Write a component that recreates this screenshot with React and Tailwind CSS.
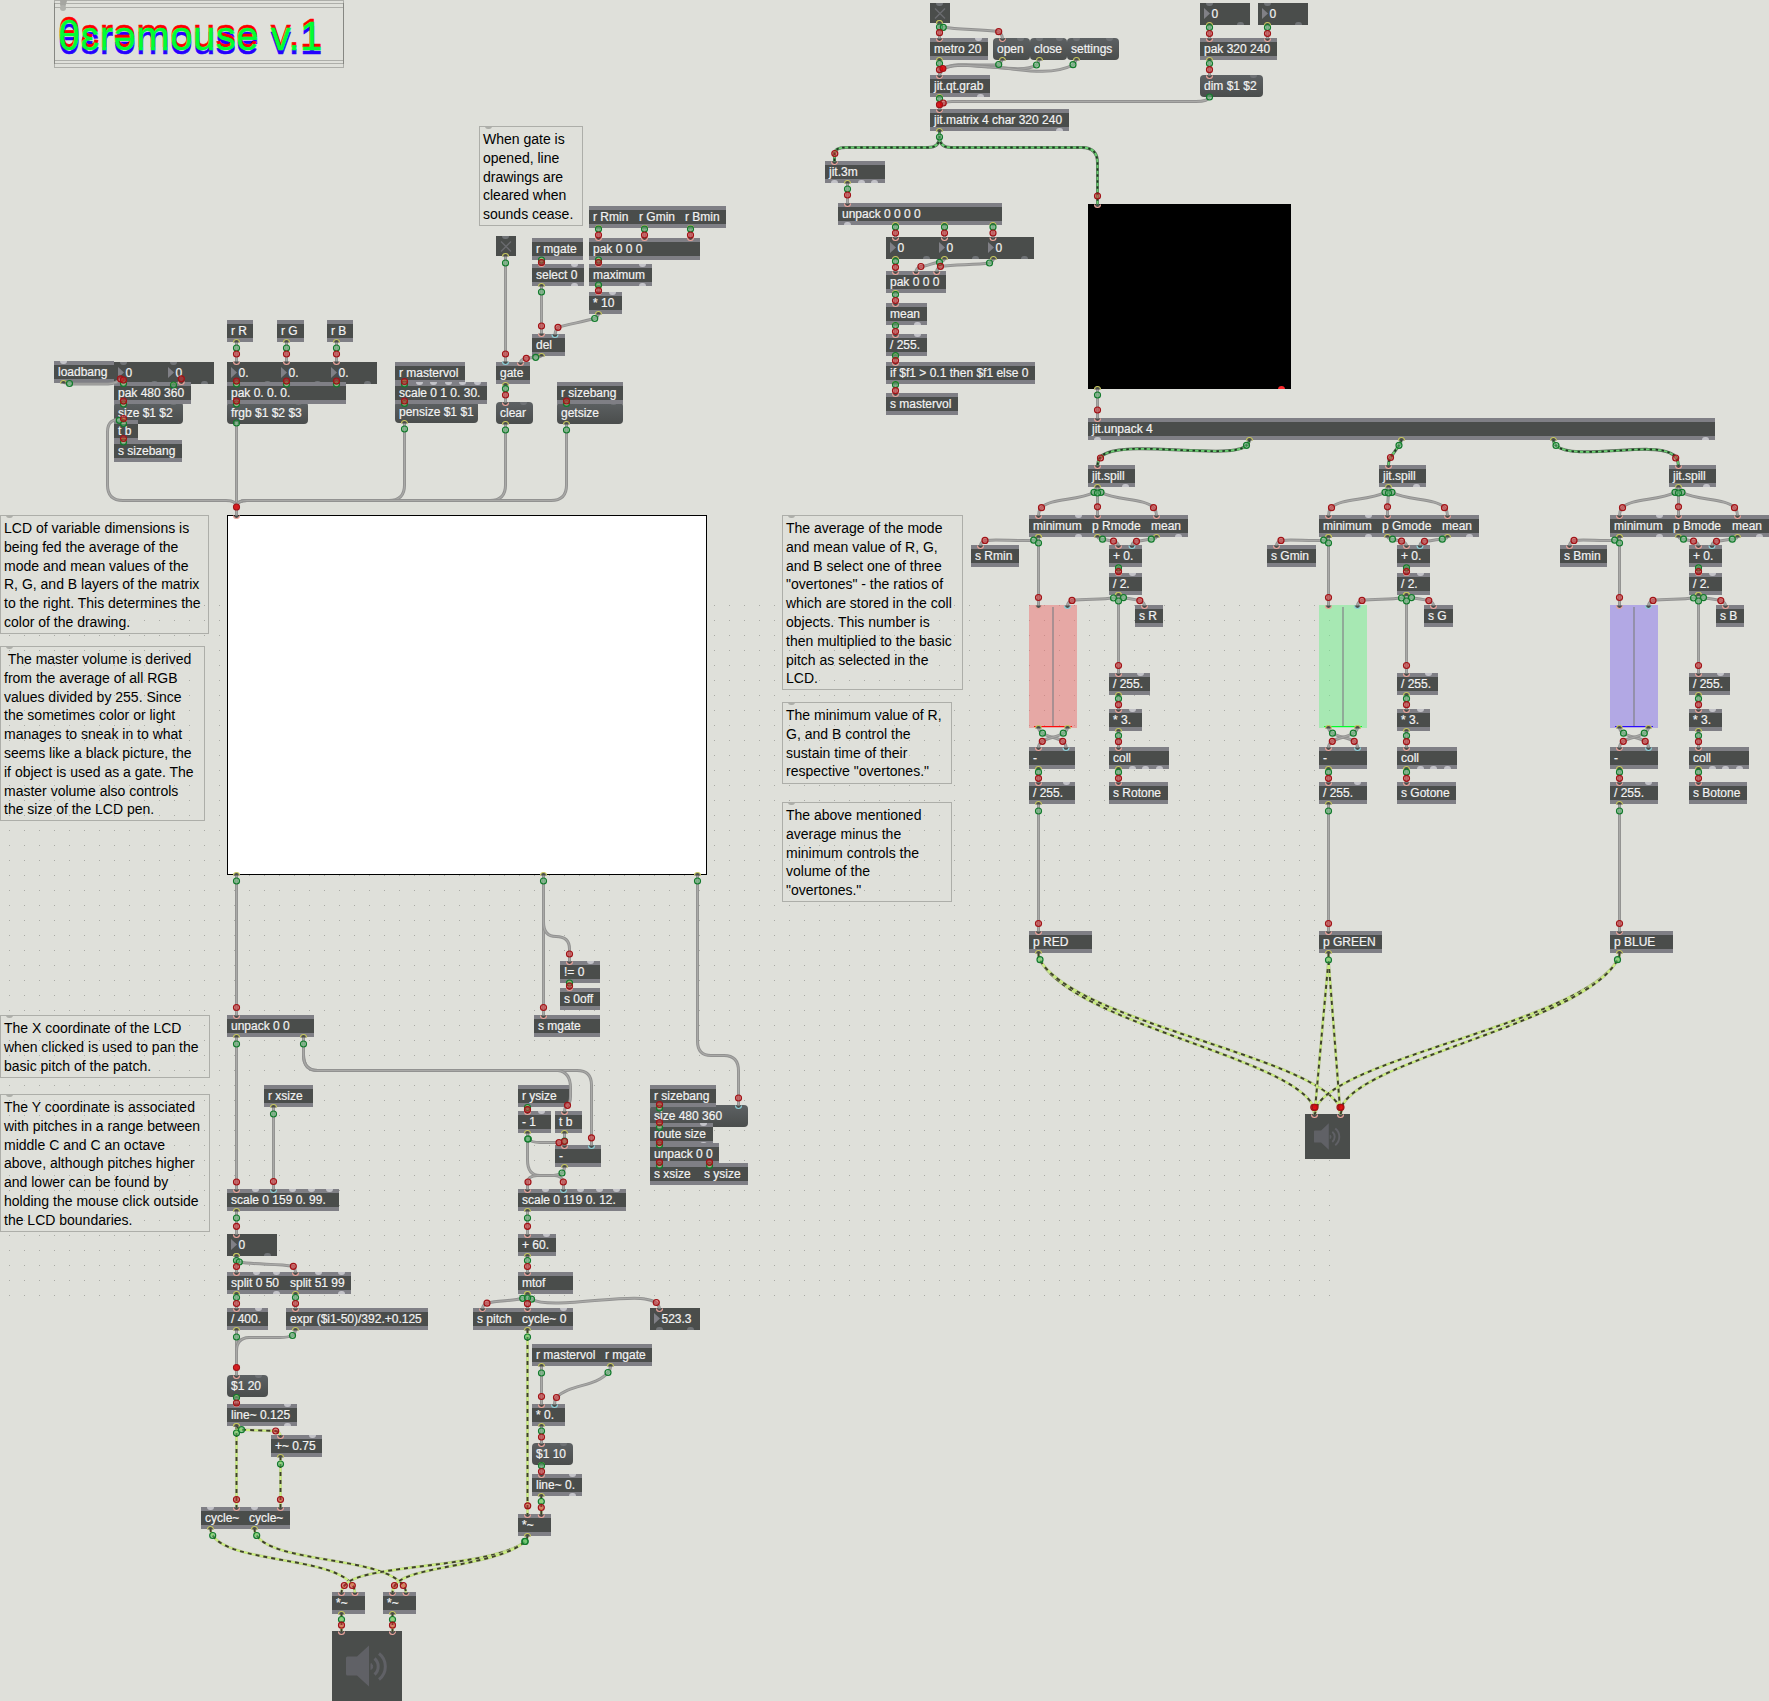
import React from "react";

/* ---------- objects: [kind, x, y, width, text, free inlets, free outlets] ---------- */
/* kinds: o = object, m = message, n = number */
const NODES = [
  ["n", 114, 362, 50, "0", [123.5], [154.5]],
  ["n", 164, 362, 50, "0", [173.5], [204.5]],
  ["o", 54, 361, 60, "loadbang", [63.5], []],
  ["m", 114, 402, 69, "size $1 $2", [173.5], []],
  ["o", 114, 382, 77, "pak 480 360", [], []],
  ["o", 114, 420, 24, "t b", [], []],
  ["o", 114, 440, 68, "s sizebang", [], []],
  ["o", 227, 320, 26, "r R", [], []],
  ["o", 277, 320, 27, "r G", [], []],
  ["o", 327, 320, 26, "r B", [], []],
  ["n", 227, 362, 50, "0.", [], [267.5]],
  ["n", 277, 362, 50, "0.", [], [317.5]],
  ["n", 327, 362, 50, "0.", [], [367.5]],
  ["m", 227, 402, 81, "frgb $1 $2 $3", [298.5], []],
  ["o", 227, 382, 119, "pak 0. 0. 0.", [], []],
  ["m", 395, 401, 83, "pensize $1 $1", [468.5], []],
  ["o", 395, 362, 70, "r mastervol", [], []],
  ["o", 395, 382, 92, "scale 0 1 0. 30.", [419, 433.5, 448, 462.5, 477.5], []],
  ["o", 532, 238, 51, "r mgate", [], []],
  ["o", 532, 264, 52, "select 0", [574.5], [574.5]],
  ["o", 589, 206, 46, "r Rmin", [], []],
  ["o", 635, 206, 46, "r Gmin", [], []],
  ["o", 681, 206, 45, "r Bmin", [], []],
  ["o", 589, 238, 111, "pak 0 0 0", [], []],
  ["o", 589, 264, 63, "maximum", [642.5], [642.5]],
  ["o", 589, 292, 33, "* 10", [612], []],
  ["o", 532, 334, 33, "del", [], []],
  ["o", 496, 362, 34, "gate", [], []],
  ["m", 496, 402, 37, "clear", [523.5], []],
  ["m", 557, 402, 66, "getsize", [613.5], []],
  ["o", 557, 382, 66, "r sizebang", [], []],

  ["o", 930, 38, 58, "metro 20", [978.5], []],
  ["m", 993, 38, 37, "open", [1020.5], []],
  ["m", 1030, 38, 37, "close", [1039.5, 1059.5], []],
  ["m", 1067, 38, 52, "settings", [1076.5, 1109.5], []],
  ["o", 930, 75, 60, "jit.qt.grab", [], [980.5]],
  ["o", 930, 109, 139, "jit.matrix 4 char 320 240", [], [1059.5]],
  ["n", 1200, 3, 50, "0", [1209.5], [1240.5]],
  ["n", 1258, 3, 50, "0", [1267.5], [1298.5]],
  ["o", 1200, 38, 77, "pak 320 240", [], []],
  ["m", 1200, 75, 63, "dim $1 $2", [1253.5], []],
  ["o", 825, 161, 60, "jit.3m", [], [834.5, 861.5, 874.5]],
  ["o", 838, 203, 164, "unpack 0 0 0 0", [], [847.5]],
  ["n", 886, 237, 50, "0", [], [926.5]],
  ["n", 935, 237, 50, "0", [], [975.5]],
  ["n", 984, 237, 50, "0", [], [1024.5]],
  ["o", 886, 271, 60, "pak 0 0 0", [], []],
  ["o", 886, 303, 41, "mean", [], [917.5]],
  ["o", 886, 334, 41, "/ 255.", [917.5], []],
  ["o", 886, 362, 149, "if $f1 > 0.1 then $f1 else 0", [], []],
  ["o", 886, 393, 72, "s mastervol", [], []],
  ["o", 1088, 418, 627, "jit.unpack 4", [], [1097.5, 1705.5]],

  ["o", 227, 1015, 87, "unpack 0 0", [], []],
  ["o", 534, 1015, 66, "s mgate", [], []],
  ["o", 560, 961, 40, "!= 0", [590.5], []],
  ["o", 560, 988, 40, "s 0off", [], []],
  ["o", 264, 1085, 49, "r xsize", [], []],
  ["o", 518, 1085, 51, "r ysize", [], []],
  ["o", 518, 1111, 33, "- 1", [541], []],
  ["o", 555, 1111, 27, "t b", [], []],
  ["o", 555, 1145, 46, "-", [], []],
  ["m", 650, 1105, 98, "size 480 360", [], []],
  ["o", 650, 1085, 66, "r sizebang", [], []],
  ["o", 650, 1123, 63, "route size", [703.5], [703.5]],
  ["o", 650, 1143, 69, "unpack 0 0", [], []],
  ["o", 650, 1163, 50, "s xsize", [], []],
  ["o", 700, 1163, 48, "s ysize", [], []],
  ["o", 227, 1189, 112, "scale 0 159 0. 99.", [255, 292.5, 311, 329.5], []],
  ["o", 518, 1189, 108, "scale 0 119 0. 12.", [545.5, 580.5, 599, 616.5], []],
  ["n", 227, 1234, 50, "0", [], [267.5]],
  ["o", 518, 1234, 38, "+ 60.", [546.5], []],
  ["o", 227, 1272, 59, "split 0 50", [256.5, 276.5], [276.5]],
  ["o", 286, 1272, 65, "split 51 99", [318.5, 341.5], [341.5]],
  ["o", 518, 1272, 55, "mtof", [], []],
  ["o", 227, 1308, 41, "/ 400.", [258.5], []],
  ["o", 286, 1308, 142, "expr ($i1-50)/392.+0.125", [], []],
  ["o", 473, 1308, 45, "s pitch", [], []],
  ["o", 518, 1308, 55, "cycle~ 0", [563.5], []],
  ["n", 650, 1308, 50, "523.3", [], [659.5, 690.5]],
  ["m", 227, 1375, 41, "$1 20", [258.5], []],
  ["o", 227, 1404, 70, "line~ 0.125", [287.5], [287.5]],
  ["o", 532, 1344, 69, "r mastervol", [], []],
  ["o", 601, 1344, 51, "r mgate", [], []],
  ["o", 532, 1404, 33, "* 0.", [], []],
  ["m", 532, 1443, 41, "$1 10", [563.5], []],
  ["o", 532, 1474, 50, "line~ 0.", [572.5], [572.5]],
  ["o", 518, 1514, 33, "*~", [], []],
  ["o", 271, 1435, 51, "+~ 0.75", [312.5], []],
  ["o", 201, 1507, 44, "cycle~", [210.5], []],
  ["o", 245, 1507, 45, "cycle~", [254.5], []],
  ["o", 332, 1592, 33, "*~", [], []],
  ["o", 383, 1592, 33, "*~", [], []],
];

/* ---------- one colour channel of the analysis section ---------- */
const CHANNELS = [
  { c: "R", name: "RED", spill: 1088, min: 1029, p: 1088, mean: 1147, s: 971, sw: 48, add: 1109, sx: 1135, sxw: 28, mw: 46, otw: 59, in2: 1066 },
  { c: "G", name: "GREEN", spill: 1379, min: 1319, p: 1378, mean: 1438, s: 1267, sw: 49, add: 1397, sx: 1424, sxw: 29, mw: 48, otw: 59, in2: 1357.5 },
  { c: "B", name: "BLUE", spill: 1669, min: 1610, p: 1669, mean: 1728, s: 1560, sw: 47, add: 1689, sx: 1716, sxw: 28, mw: 48, otw: 58, in2: 1648.5 },
];

CHANNELS.forEach((k) => {
  NODES.push(
    ["o", k.spill, 465, 47, "jit.spill", [], [k.spill + 37]],
    ["o", k.min, 515, k.p - k.min, "minimum", [k.min + 49], [k.min + 49]],
    ["o", k.p, 515, k.mean - k.p, `p ${k.c}mode`, [], []],
    ["o", k.mean, 515, 41, "mean", [], [k.mean + 31]],
    ["o", k.s, 545, k.sw, `s ${k.c}min`, [], []],
    ["o", k.add, 545, 33, "+ 0.", [], []],
    ["o", k.add, 573, 33, "/ 2.", [k.add + 23], []],
    ["o", k.sx, 605, k.sxw, `s ${k.c}`, [], []],
    ["o", k.add, 673, 41, "/ 255.", [k.add + 31.5], []],
    ["o", k.add, 709, 33, "* 3.", [k.add + 23], []],
    ["o", k.add, 747, 60, "coll", [], [k.add + 23, k.add + 36.5, k.add + 50]],
    ["o", k.add, 782, k.otw, `s ${k.c}otone`, [], []],
    ["o", k.min, 747, k.mw, "-", [], []],
    ["o", k.min, 782, k.mw, "/ 255.", [k.in2], []],
    ["o", k.min, 931, 63, `p ${k.name}`, [], []]
  );
});

/* ---------- patch cords: type, path, outlet, green handle, red handle, inlet ---------- */
const WIRES = [];
const cord = (t, d, out, g, r, inn, opt = {}) => WIRES.push({ t, d, out, g, r, inn, ...opt });
const vert = (x, y1, y2, gy, ry, t = "c", opt = {}) =>
  cord(t, `M${x} ${y1}V${y2}`, [x, y1], [x, gy], [x, ry], [x, y2], opt);
/* short S-shaped cord that runs through both handles */
const curve = (t, o, g, r, i, k = 0, opt = {}) => {
  const dx = r[0] - g[0];
  cord(
    t,
    `M${o[0]} ${o[1]}Q${o[0]} ${(o[1] + g[1]) / 2 + 1} ${g[0]} ${g[1]}C${g[0] + dx * 0.3} ${g[1] + k} ${r[0] - dx * 0.3} ${r[1] - k} ${r[0]} ${r[1]}Q${i[0]} ${(r[1] + i[1]) / 2 - 1} ${i[0]} ${i[1]}`,
    o, g, r, i, opt
  );
};

/* left top */
cord("c", "M63.5 382Q66 384 75 384H108Q117 383.5 120.5 379", [63.5, 382], [69.5, 383.5], [120.5, 378.8], null);
vert(123.5, 382, 382, 383.5, 380);
cord("c", "", [173.5, 384], [173.5, 385], [181.3, 378.8], [181.3, 382]);
vert(123.5, 403, 403, 404, 401);
vert(123.5, 420, 421, 423.5, 418.5);
vert(123.5, 440, 440, 442, 438.5);
cord("c", "M123.5 420Q107.5 417 107.5 432V485Q107.5 500.5 123 500.5H226Q236.5 500.5 236.5 507", null, [119.3, 420.3], null, null);
[236.5, 286.5, 336.5].forEach((x) => {
  vert(x, 341, 362, 348, 354);
  vert(x, 383, 383, 384, 381);
});
vert(236.5, 403, 403, 404, 401);
cord("c", "M236.5 422V516", null, [236.5, 423], [236.5, 507], [236.5, 516], { hot: true });
vert(404.5, 382, 382, 384, 381.5);
vert(404.5, 402, 402, 403.5, 401);
cord("c", "M404.5 422V485Q404.5 500.5 389 500.5H247Q236.5 500.5 236.5 507", [404.5, 422], [404.5, 429], null, null);
cord("c", "M505.5 423V485Q505.5 500.5 490 500.5H247Q236.5 500.5 236.5 507", [505.5, 423], [505.5, 430], null, null);
cord("c", "M566.5 423V485Q566.5 500.5 551 500.5H247Q236.5 500.5 236.5 507", [566.5, 423], [566.5, 430], null, null);
vert(566.5, 402, 402, 403.5, 401);
cord("c", "M505.5 255V363", [505.5, 255], [505.5, 263], [505.5, 354], [505.5, 362], { cold: true });
[598.5, 644.5, 690.5].forEach((x) => vert(x, 227, 238, 229, 235));
vert(541.5, 260, 264, 260, 262.5);
vert(598.5, 260, 264, 260, 262.5);
vert(598.5, 286, 292, 285, 290.7);
vert(541.5, 285, 334, 292, 326);
curve("c", [598.5, 313], [594.7, 318.5], [558, 327.3], [555, 335], 3, { cold: true });
curve("c", [541.5, 355], [535.7, 357.3], [526.3, 358.3], [520.5, 363]);
vert(505.5, 384, 403, 388.7, 395);

/* camera section */
vert(939.5, 22, 39, 27, 32.7);
curve("c", [939.5, 22], [943.3, 27.3], [998.7, 31.7], [1002.5, 39], 2.5);
cord("c", "M1002.5 59Q1001 63 998.7 64.5C985 67 955 61 943 68.7", [1002.5, 59], [998.7, 64.5], null, null);
cord("c", "M1039.5 59Q1038.5 63 1036.5 65C1020 76 965 58 943 68.7", [1039.5, 59], [1036.5, 65], null, null);
cord("c", "M1076.5 59Q1075 63 1073 65C1048 78 1010 67 990 67C970 66 955 63 943 68.7", [1076.5, 59], [1073, 64.7], null, null);
vert(939.5, 59, 76, 63.5, 69.7);
cord("c", "M943 68.7L940 74", null, null, [942.9, 68.5], null, { hot: true });
cord("c", "M1209.5 97Q1208 101.5 1196 101.5H952Q943 101.5 940 108", null, [1209.5, 97], [943.2, 103], null);
vert(939.5, 96, 110, 98.5, 104.7, "c", { hot: true });
[1209.5, 1267.5].forEach((x) => vert(x, 24, 39, 27.5, 33.5));
vert(1209.5, 59, 76, 63.5, 69.7);
cord("j", "M939.5 130V137Q939.5 147.5 928 147.5H846Q834.5 147.5 834.5 154V162", [939.5, 130], [939.5, 137], [834.8, 153.5], [834.5, 162]);
cord("j", "M939.5 130V137Q939.5 147.5 951 147.5H1082Q1097.5 147.5 1097.5 163V205", null, null, [1097.5, 196], [1097.5, 205]);
vert(847.5, 182, 204, 189, 195);
[895.5, 944.5, 993].forEach((x) => vert(x, 224, 238, 227, 233));
vert(895.5, 258, 272, 261.3, 267.3);
curve("c", [944.5, 258], [939.5, 262.3], [920.9, 266.5], [916, 272]);
curve("c", [993.5, 258], [989.5, 263], [940.5, 266.3], [936.7, 272], 2);
vert(895.5, 292, 304, 294.5, 300.5);
vert(895.5, 324, 335, 325.5, 331.5);
vert(895.5, 355, 363, 355.7, 360.5);
vert(895.5, 383, 394, 384.7, 390.7);
vert(1097.5, 388, 419, 395, 410);
cord("j", "M1249.5 439Q1249 444 1246.5 445.3C1234 460 1135 441 1107 453Q1098 456 1097.5 466", [1249.5, 439], [1246.5, 445.3], [1100.5, 458], [1097.5, 466]);
cord("j", "M1401.5 439Q1401 443 1399 445.3L1390.5 457.5Q1388.5 460 1388.5 466", [1401.5, 439], [1399, 445.3], [1390.5, 457.5], [1388.5, 466]);
cord("j", "M1553.5 439Q1553.5 444 1556 445.5C1572 461 1650 442 1670 453Q1678 456 1678.5 466", [1553.5, 439], [1556, 445.5], [1675.7, 458], [1678.5, 466]);

/* colour channels */
CHANNELS.forEach((k) => {
  const sp = k.spill + 9.5;
  const mi = k.min + 9.5;
  const pi = k.p + 9.5;
  const me = k.mean + 9.5;
  const ad = k.add + 9.5;
  cord("c", `M${sp} 486L${sp - 3.5} 492.3C${sp - 20} 501 ${mi + 12} 498 ${mi + 3} 507.7Q${mi} 510 ${mi} 516`, [sp, 486], [sp - 3.5, 492.3], [mi + 3, 507.7], [mi, 516]);
  cord("c", `M${sp} 486L${sp + 3.5} 492.3C${sp + 20} 501 ${me - 12} 498 ${me - 3} 507.7Q${me} 510 ${me} 516`, null, [sp + 3.5, 492.3], [me - 3, 507.7], [me, 516]);
  cord("c", `M${sp} 486V493L${pi} 507V516`, null, [sp, 493], [pi, 506.8], [pi, 516]);
  const si = k.s + 9.5;
  curve("c", [mi, 536], [mi - 4.8, 540.2], [si + 4.5, 540.4], [si, 546], 1.2);
  vert(mi, 536, 606, 543, 597.5);
  curve("c", [pi, 536], [pi + 5, 539.2], [ad - 5, 541.2], [ad, 546]);
  curve("c", [me, 536], [me - 5.2, 539.2], [ad + 18, 541.3], [ad + 13.5, 546], 0, { cold: true });
  vert(ad, 567, 573, 567.8, 571.6);
  curve("c", [ad, 594], [ad - 5, 598], [k.min + 43, 600.4], [k.min + 38.5, 606], 1.5, { cold: true });
  const xi = k.sx + 9.5;
  curve("c", [ad, 594], [ad + 5, 597.6], [xi - 4.7, 600.6], [xi, 606], 1);
  vert(ad, 594, 674, 601, 665.5);
  vert(ad, 694, 710, 698.7, 704.7);
  vert(ad, 730, 748, 735.7, 741.7);
  vert(ad, 768, 783, 772.2, 778.3);
  const m2 = k.min + 38.5;
  curve("c", [mi, 727], [mi + 4, 733.2], [k.in2 - 3.3, 741.3], [k.in2, 748], 4, { cold: true });
  curve("c", [m2, 727], [m2 - 4.2, 733.2], [mi + 3.8, 741.3], [mi, 748], 4);
  vert(mi, 768, 783, 772.2, 778.3);
  vert(mi, 803, 932, 811, 923.5);
});

/* outputs of the channel players */
cord("s", "M1038.5 953Q1038.5 958 1040 960C1072 1022 1285 1057 1312 1104L1314.5 1115", [1038.5, 952], [1040, 959.7], [1313.8, 1107.3], [1314.5, 1115]);
cord("s", "M1038.5 953Q1038.5 958 1040 960C1075 1021 1305 1055 1338 1104L1340.5 1115", null, null, [1340, 1107.3], [1340.5, 1115]);
cord("s", "M1328.5 953V960L1314.5 1115", [1328.5, 952], [1328.5, 960], [1315, 1107.3], null, { hot: true });
cord("s", "M1328.5 953V960L1340.5 1115", null, null, [1341, 1107.3], null, { hot: true });
cord("s", "M1619.5 953Q1619.5 958 1617.5 960C1583 1021 1352 1055 1318 1104L1314.5 1115", [1619.5, 952], [1617.5, 959.7], null, null);
cord("s", "M1619.5 953Q1619.5 958 1617.5 960C1583 1022 1372 1057 1343 1104L1340.5 1115", null, null, null, null);

/* under the LCD */
vert(236.5, 874, 1016, 881, 1007.5);
vert(543.5, 874, 1016, 881, 1007.5);
cord("c", "M543.5 881V922Q543.5 936.5 556 936.5Q569.5 936.5 569.5 949V962", null, null, [569.5, 954], [569.5, 962]);
cord("c", "M697.5 874V1041Q697.5 1055.5 711 1055.5H724Q738.5 1055.5 738.5 1071V1106", [697.5, 874], [697.5, 881], [738.5, 1098], [738.5, 1106], { cold: true });
vert(569.5, 983, 988, 983, 986);
vert(236.5, 1036, 1190, 1044, 1182);
cord("c", "M303.5 1036V1055Q303.5 1070.5 318 1070.5H577Q591.5 1070.5 591.5 1085V1146", [303.5, 1036], [303.5, 1044], [591.5, 1137.8], [591.5, 1146], { cold: true });
cord("c", "M303.5 1036V1055Q303.5 1070.5 318 1070.5H558Q570.5 1072 570.5 1088V1096Q570.5 1103 567.5 1105Q564.5 1107 564.5 1112", null, null, [567.5, 1105.3], [564.5, 1112]);
cord("c", "M273.5 1106V1190", [273.5, 1106], [273.5, 1114], [273.5, 1181.5], [273.5, 1190], { cold: true });
vert(527.5, 1107, 1112, 1107.5, 1109.7);
cord("c", "M527.5 1132L528.5 1139Q531 1142.5 540 1142.5H556Q562 1142.5 564.5 1146", [527.5, 1132], [528.3, 1139], [559, 1142.6], null);
cord("c", "M527.5 1132V1160Q527.5 1175.5 540 1175.5H555Q562 1176 563.5 1182V1190", null, [527.7, 1139], [563.3, 1182], [563.5, 1190], { cold: true });
vert(564.5, 1132, 1146, 1141, 1141.5);
cord("c", "M564.5 1166Q564.5 1171 562 1173Q558 1175.5 550 1175.5H537Q528 1176 527.5 1182V1190", [564.5, 1166], [562, 1173], [528, 1182], [527.5, 1190]);
vert(659.5, 1106, 1106, 1108, 1104.5);
vert(659.5, 1125, 1125, 1127.3, 1122.5);
vert(659.5, 1144, 1144, 1145, 1142.3);
vert(659.5, 1164, 1164, 1165.5, 1162.3);
vert(709.5, 1164, 1164, 1165.5, 1162.3);
[236.5, 527.5].forEach((x) => {
  vert(x, 1210, 1235, 1218, 1226.3);
  vert(x, 1255, 1273, 1260.5, 1266.5);
});
curve("c", [236.5, 1255], [239.3, 1262], [293.3, 1266.3], [295.5, 1273], 3);
vert(236.5, 1293, 1309, 1297.5, 1303.5);
vert(295.5, 1293, 1309, 1297.5, 1303.5);
vert(236.5, 1329, 1376, 1337, 1367.5, "c", { hot: true });
cord("c", "M295.5 1329Q295 1334 292.5 1335.5Q288 1337.5 280 1337.5H249Q236.5 1338 236.5 1351V1367", [295.5, 1329], [292.5, 1335.5], null, null);
vert(236.5, 1397, 1404, 1397.5, 1403);
curve("c", [527.5, 1293], [522.7, 1298.3], [487, 1303.2], [482.5, 1309], 3);
cord("c", "M527.5 1293L531.5 1299.3C550 1310 625 1294 645 1299Q659 1301 659.5 1309", null, [531.5, 1299.2], [656.3, 1302.5], [659.5, 1309]);
vert(527.5, 1293, 1309, 1298, 1303.7);
cord("s", "M527.5 1329V1515", [527.5, 1329], [527.5, 1337], [527.7, 1505.8], [527.5, 1515]);
vert(541.5, 1365, 1405, 1373, 1396.5);
cord("c", "M610.5 1365Q610.5 1370 608 1372.5C596 1387 569 1384 556.5 1397.5Q554.5 1400 554.5 1405", [610.5, 1365], [608, 1372.5], [556.5, 1397.5], [554.5, 1405], { cold: true });
vert(541.5, 1425, 1444, 1431, 1437);
vert(541.5, 1464, 1475, 1465.7, 1471.5);
vert(541.3, 1495, 1515, 1501.5, 1507.5, "s");
vert(236.5, 1425, 1508, 1433, 1499.5, "s");
curve("s", [236.5, 1425], [241.5, 1429.7], [275.7, 1431], [280.5, 1436], 0.5);
vert(280.5, 1456, 1508, 1464, 1499.5, "s");
cord("s", "M210.5 1528Q210.5 1533 212.7 1535.5C230 1562 325 1557 350 1582Q354.5 1586 355 1593", [210.5, 1528], [212.7, 1535.5], [352.3, 1585.5], [355, 1593]);
cord("s", "M254.5 1528Q254.5 1533 256.7 1535.5C274 1562 374 1557 400 1582Q405.5 1586 406 1593", [254.5, 1528], [256.7, 1535.5], [403.3, 1585.5], [406, 1593]);
cord("s", "M527.5 1535Q527.5 1539 525 1541.5C492 1568 365 1564 346 1584Q341.5 1588 341.5 1593", [527.5, 1535], [524.8, 1541.3], [344.3, 1585.5], [341.5, 1593]);
cord("s", "M527.5 1535Q527.5 1539 525 1541.5C498 1566 410 1566 396 1584Q392.5 1588 392.5 1593", null, [525.2, 1541.5], [394.5, 1585.5], [392.5, 1593]);
vert(341.5, 1613, 1632, 1619.5, 1625.2, "s");
vert(392.5, 1613, 1632, 1619.5, 1625.2, "s");

/* ---------- comment boxes: [x, y, width, height, lines] ---------- */
const COMMENTS = [
  [479, 126, 104, 100, ["When gate is", "opened, line", "drawings are", "cleared when", "sounds cease."]],
  [0, 515, 209, 119, ["LCD of variable dimensions is", "being fed the average of the", "mode and mean values of the", "R, G, and B layers of the matrix", "to the right. This determines the", "color of the drawing."]],
  [0, 646, 205, 175, [" The master volume is derived", "from the average of all RGB", "values divided by 255. Since", "the sometimes color or light", "manages to sneak in to what", "seems like a black picture, the", "if object is used as a gate. The", "master volume also controls", "the size of the LCD pen."]],
  [0, 1015, 210, 63, ["The X coordinate of the LCD", "when clicked is used to pan the", "basic pitch of the patch."]],
  [0, 1094, 210, 138, ["The Y coordinate is associated", "with pitches in a range between", "middle C and C an octave", "above, although pitches higher", "and lower can be found by", "holding the mouse click outside", "the LCD boundaries."]],
  [782, 515, 181, 175, ["The average of the mode", "and mean value of R, G,", "and B select one of three", "\"overtones\" - the ratios of", "which are stored in the coll", "objects. This number is", "then multiplied to the basic", "pitch as selected in the", "LCD."]],
  [782, 702, 170, 82, ["The minimum value of R,", "G, and B control the", "sustain time of their", "respective \"overtones.\""]],
  [782, 802, 170, 100, ["The above mentioned", "average minus the", "minimum controls the", "volume of the", "\"overtones.\""]],
];

const KIND = {
  o: "border-y-4 border-[#7f7f85] bg-[#4a4d4b] leading-[14px] pl-1",
  m: "rounded-[4px] bg-linear-to-b from-[#5d6163] to-[#4a4d4c] leading-[22px] pl-1",
  n: "bg-[#4a4d4b] leading-[22px] pl-[11.5px]",
};

function Node({ kind, x, y, w, text, ins, outs }) {
  const top = kind === "o" ? "-top-1" : "top-0";
  const bottom = kind === "o" ? "-bottom-1" : "bottom-0";
  const port = kind === "o" ? "bg-[#c3c3c8]" : "bg-[#707376]";
  return (
    <div
      className={`absolute h-[22px] whitespace-nowrap text-[12px] text-[#f2f2f2] [-webkit-text-stroke:0.2px_#f2f2f2] ${KIND[kind]}`}
      style={{ left: x, top: y, width: w }}
    >
      {kind === "n" && (
        <span className="absolute left-1 top-[5px] h-[11px] w-[6px] bg-[#808086] [clip-path:polygon(0_0,100%_50%,0_100%)]" />
      )}
      {ins.map((p) => (
        <span key={`i${p}`} className={`absolute h-[3px] w-[7px] rounded-b-full ${top} ${port}`} style={{ left: p - x - 3.5 }} />
      ))}
      {outs.map((p) => (
        <span key={`o${p}`} className={`absolute h-[3px] w-[7px] rounded-t-full ${bottom} ${port}`} style={{ left: p - x - 3.5 }} />
      ))}
      {text}
    </div>
  );
}

function Comment({ x, y, w, h, lines }) {
  return (
    <div
      className="absolute whitespace-pre border border-[#adaea9] pl-[3px] pt-[3px] text-[14px] leading-[18.8px] text-black"
      style={{ left: x, top: y, width: w, height: h }}
    >
      <span className="absolute -top-px left-[5px] h-[3px] w-[7px] rounded-b-full bg-[#adaea9]" />
      {lines.map((l) => (
        <div key={l}>{l}</div>
      ))}
    </div>
  );
}

function Toggle({ x, y }) {
  return (
    <div className="absolute size-5 bg-[#4a4d4b]" style={{ left: x, top: y }}>
      <span className="absolute left-[6px] top-0 h-[3px] w-[7px] rounded-b-full bg-[#707376]" />
      <svg className="size-5" viewBox="0 0 20 20" fill="none" stroke="#6b6c70" strokeWidth="1.3">
        <path d="M5 5.5l10 10M15 5.5l-10 10" />
      </svg>
    </div>
  );
}

function Meter({ x, fill, line }) {
  return (
    <div className={`absolute top-[605px] h-[123px] w-12 ${fill}`} style={{ left: x }}>
      <span className="absolute left-[23px] top-[2px] h-[119px] w-[2px] bg-[#808086]/60" />
      <span className={`absolute bottom-[1px] left-[5px] h-px w-[38px] ${line}`} />
    </div>
  );
}

function Speaker({ className }) {
  return (
    <div className={`absolute bg-[#4a4d4b] ${className}`}>
      <svg className="size-full" viewBox="0 0 70 70" fill="none" stroke="#606166">
        <path d="M15.500 25.500H25L37 14.500V55.500L25 44.500H15.500Q14 44.500 14 43V27Q14 25.500 15.500 25.500Z" fill="#606166" stroke="none" />
        <path d="M39 32.500A3.500 3.500 0 0 1 39 38.500Z" fill="#606166" />
        <path d="M42.500 27.500A10.500 10.500 0 0 1 42.500 43.500M47 22.500A16.500 16.500 0 0 1 47 48.500" strokeWidth="3" />
      </svg>
    </div>
  );
}

const CORD = {
  c: { base: "#929291", top: "#a9a9a7", w: 3, tw: 1.2, dash: null },
  s: { base: "#bcc4a4", top: "#cdf07f", w: 2.8, tw: 1.9, dash: "#3e3f2c", pattern: "4 4" },
  j: { base: "#5a6b5a", top: "#69cf70", w: 3, tw: 1.8, dash: "#1f3522", pattern: "2.500 3.500" },
};

function Cords() {
  return (
    <svg className="pointer-events-none absolute left-0 top-0" width="1769" height="1701" viewBox="0 0 1769 1701" fill="none">
      {WIRES.map(({ t, d }, i) =>
        d ? (
          <g key={i}>
            <path d={d} stroke={CORD[t].base} strokeWidth={CORD[t].w} />
            <path d={d} stroke={CORD[t].top} strokeWidth={CORD[t].tw} />
            {CORD[t].dash && <path d={d} stroke={CORD[t].dash} strokeWidth={CORD[t].tw} strokeDasharray={CORD[t].pattern} />}
          </g>
        ) : null
      )}
      {WIRES.map(({ out, inn, cold }, i) => (
        <g key={i} strokeWidth="1.1">
          {out && <path d={`M${out[0] - 3} ${out[1] + 1.5}a3 3 0 0 1 6 0`} fill="#4a4d4b" stroke="#c9c960" />}
          {inn && <path d={`M${inn[0] - 3} ${inn[1] - 0.5}a3 3 0 0 0 6 0`} fill="#4a4d4b" stroke={cold ? "#8fd3dc" : "#eea59c"} />}
        </g>
      ))}
      {WIRES.map(({ g, t }, i) =>
        g ? (
          <g key={i}>
            <circle cx={g[0]} cy={g[1]} r="2.8" fill={t === "s" ? "#b8f0a8" : "#dfe0da"} fillOpacity="0.3" />
            <circle cx={g[0]} cy={g[1]} r="3" stroke="#137a2c" strokeWidth="1.2" fill="#22a844" fillOpacity="0.33" />
          </g>
        ) : null
      )}
      {WIRES.map(({ r, hot }, i) =>
        r ? (
          <circle key={i} cx={r[0]} cy={r[1]} r="3" stroke="#a01317" strokeWidth="1.2" fill={hot ? "#e0060a" : "#dc2a2e"} fillOpacity={hot ? 0.85 : 0.5} />
        ) : null
      )}
    </svg>
  );
}

const TITLE = "absolute left-0 whitespace-pre text-[40px] leading-none tracking-[0.55px]";

export default function App() {
  return (
    <main className="relative h-[1701px] w-[1769px] overflow-hidden bg-[#dfe0da] font-['Liberation_Sans',Arial,sans-serif]">
      {/* alignment grid of the unlocked patcher */}
      <div className="absolute left-[9px] top-[605px] h-[691px] w-[1321px] bg-[#a9aaa5] [mask-image:linear-gradient(90deg,#000_1px,transparent_1px),linear-gradient(#000_1px,transparent_1px)] [mask-size:15px_15px] [mask-composite:intersect]" />

      <div className="absolute left-[54px] top-0 h-[61px] w-[290px] border border-[#adaea9]" />
      <div className="absolute left-[54px] top-[3px] h-[61px] w-[290px] border border-[#adaea9]" />
      <div className="absolute left-[54px] top-[7px] h-[61px] w-[290px] border border-[#adaea9]" />
      <div className="absolute left-[54px] top-[3px] h-[61px] w-[290px] border-x border-[#868782]" />
      <div className="absolute left-[60px] top-[-3px] size-[7px] rounded-full bg-[#a5a6a1]" />
      <div className="absolute left-[60px] top-[1px] size-[6px] rounded-full bg-[#a5a6a1]" />
      <div className="absolute left-[60px] top-[5px] size-[6px] rounded-full bg-[#b0b1ac]" />
      <div className="absolute left-[58px] top-0 h-[60px] w-[280px]">
        <div className={`${TITLE} top-[20px] text-[#2500ff] [-webkit-text-stroke:0.6px_#2500ff]`}>θɛrəmouse v.1</div>
        <div className={`${TITLE} top-[13px] text-[#ff0000] [-webkit-text-stroke:0.6px_#ff0000]`}>θɛrəmouse v.1</div>
        <div className={`${TITLE} top-[16px] text-[#00ff33] [-webkit-text-stroke:0.6px_#00ff33]`}>θɛrəmouse v.1</div>
      </div>

      {COMMENTS.map(([x, y, w, h, lines]) => (
        <Comment key={`${x}-${y}`} x={x} y={y} w={w} h={h} lines={lines} />
      ))}

      <div className="absolute left-[227px] top-[515px] h-[360px] w-[480px] border border-black bg-white" />
      <div className="absolute left-[1088px] top-[204px] h-[185px] w-[203px] overflow-hidden bg-black">
        <span className="absolute -bottom-[4px] left-[190px] size-[7px] rounded-full bg-[#ff2a2e]" />
      </div>

      <Meter x={1029} fill="bg-[#ee7070]/50" line="bg-[#ff0a0a]" />
      <Meter x={1319} fill="bg-[#70f08c]/50" line="bg-[#00ff2a]" />
      <Meter x={1610} fill="bg-[#8670ee]/50" line="bg-[#2a0aff]" />

      <Toggle x={496} y={236} />
      <Toggle x={930} y={3} />

      {NODES.map(([kind, x, y, w, text, ins, outs]) => (
        <Node key={`${x}-${y}`} kind={kind} x={x} y={y} w={w} text={text} ins={ins} outs={outs} />
      ))}

      <Speaker className="left-[1305px] top-[1114px] size-[45px]" />
      <Speaker className="left-[332px] top-[1631px] size-[70px]" />

      <Cords />
    </main>
  );
}
